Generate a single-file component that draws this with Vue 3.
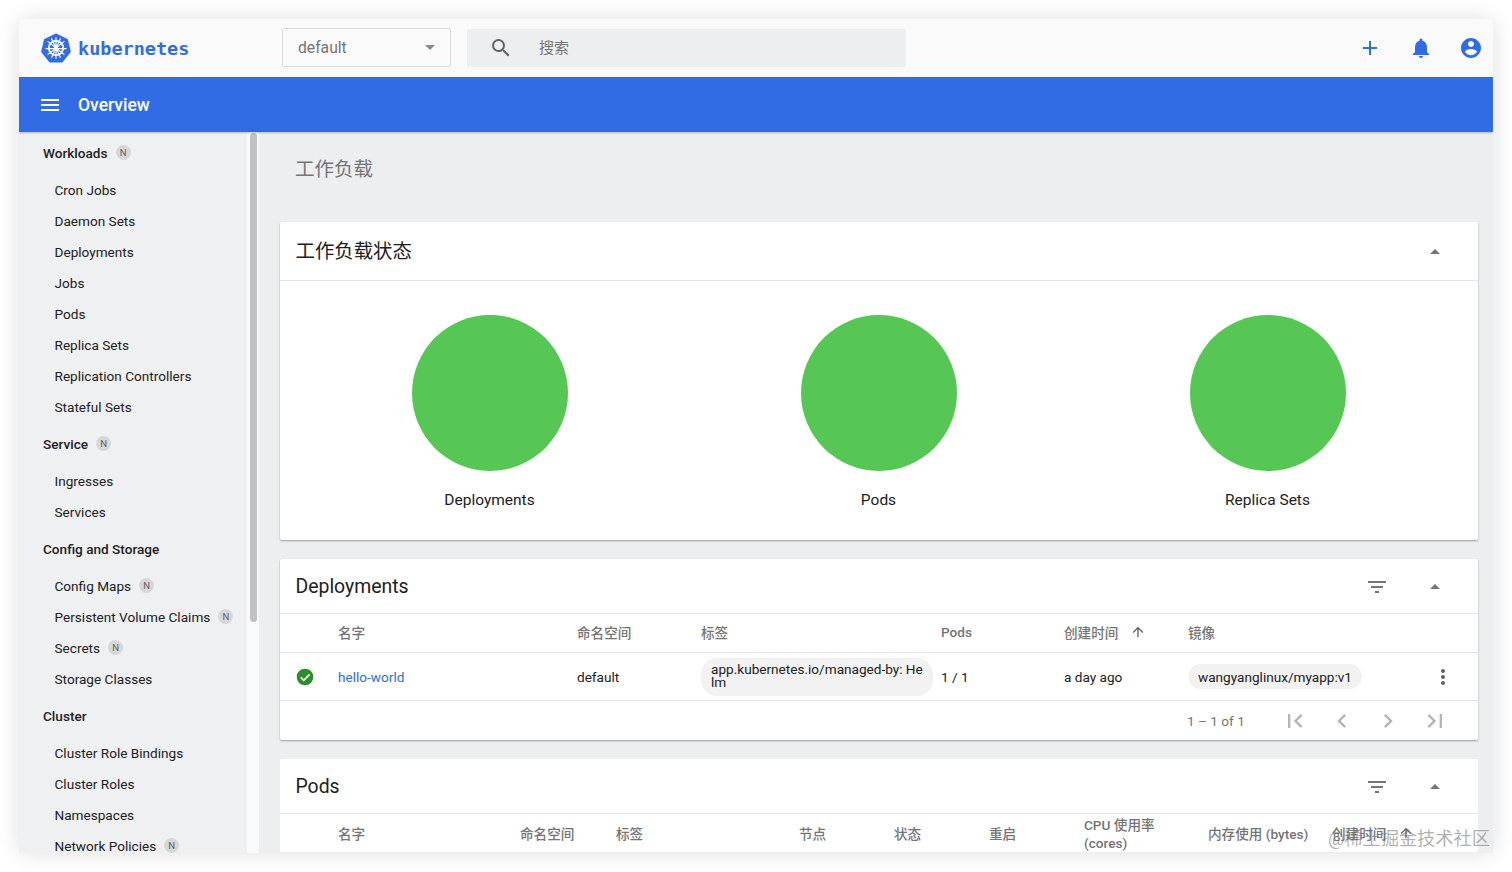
<script setup>
const nav = [
  { title: 'Workloads', n: true, items: [['Cron Jobs'], ['Daemon Sets'], ['Deployments'], ['Jobs'], ['Pods'], ['Replica Sets'], ['Replication Controllers'], ['Stateful Sets']] },
  { title: 'Service', n: true, items: [['Ingresses'], ['Services']] },
  { title: 'Config and Storage', items: [['Config Maps', 1], ['Persistent Volume Claims', 1], ['Secrets', 1], ['Storage Classes']] },
  { title: 'Cluster', items: [['Cluster Role Bindings'], ['Cluster Roles'], ['Namespaces'], ['Network Policies', 1]] }
]
const charts = ['Deployments', 'Pods', 'Replica Sets']
</script>

<template>
  <div class="page">
    <div class="window">
      <header class="topbar">
        <div class="brand">
          <svg class="logo" viewBox="0 0 30 30" width="30" height="30">
            <path d="M15 1.2 26.2 6.6 29 18.8 21.2 28.6H8.800000000000001L1 18.8 3.8 6.6Z" fill="#326ce5" stroke="#326ce5" stroke-width="1.6" stroke-linejoin="round"/>
            <g fill="none" stroke="#fff">
              <circle cx="15" cy="15" r="7.2" stroke-width="1.7"/>
              <circle cx="15" cy="15" r="1.6" stroke-width="1.2"/>
              <path stroke-width="1.2" stroke-linecap="round" d="M15 4.8V25.2M7 8.6 23 21.4M23 8.6 7 21.4M5 15.6H25M10.6 5.8 19.4 24.2M19.4 5.8 10.6 24.2"/>
            </g>
          </svg>
          <span class="wordmark">kubernetes</span>
        </div>
        <div class="ns-select">
          <span>default</span>
          <i class="caret"></i>
        </div>
        <div class="search">
          <svg viewBox="0 0 24 24" width="24" height="24"><path fill="#5f6368" d="M15.5 14h-.79l-.28-.27A6.47 6.47 0 0 0 16 9.5 6.5 6.5 0 1 0 9.500 16c1.610 0 3.090-.59 4.230-1.570l.27.28v.79l5 4.990L20.490 19l-4.990-5zm-6 0C7.010 14 5 11.990 5 9.500S7.010 5 9.500 5 14 7.010 14 9.500 11.990 14 9.500 14z"/></svg>
          <span class="search-text">搜索</span>
        </div>
        <div class="top-actions">
          <svg viewBox="0 0 24 24" width="24" height="24"><path fill="#326ce5" d="M19 13h-6v6h-2v-6H5v-2h6V5h2v6h6v2z"/></svg>
          <svg viewBox="0 0 24 24" width="24" height="24"><path fill="#326ce5" d="M12 22c1.100 0 2-.9 2-2h-4c0 1.100.89 2 2 2zm6-6v-5c0-3.070-1.640-5.640-4.500-6.320V4c0-.83-.67-1.500-1.500-1.500s-1.500.67-1.500 1.500v.68C7.630 5.360 6 7.920 6 11v5l-2 2v1h16v-1l-2-2z"/></svg>
          <svg viewBox="0 0 24 24" width="24" height="24"><path fill="#326ce5" d="M12 2C6.480 2 2 6.480 2 12s4.480 10 10 10 10-4.480 10-10S17.520 2 12 2zm0 3c1.660 0 3 1.340 3 3s-1.340 3-3 3-3-1.340-3-3 1.340-3 3-3zm0 14.200c-2.500 0-4.710-1.280-6-3.220.03-1.990 4-3.080 6-3.080 1.990 0 5.970 1.090 6 3.080-1.290 1.940-3.500 3.220-6 3.220z"/></svg>
        </div>
      </header>

      <div class="titlebar">
        <svg viewBox="0 0 24 24" width="24" height="24"><path fill="#fff" d="M3 18h18v-2H3v2zm0-5h18v-2H3v2zm0-7v2h18V6H3z"/></svg>
        <span>Overview</span>
      </div>

      <div class="body">
        <aside class="sidebar">
          <div class="nav">
            <template v-for="group in nav" :key="group.title">
              <div class="nav-head">
                <span>{{ group.title }}</span>
                <b v-if="group.n" class="ns-badge">N</b>
              </div>
              <div v-for="item in group.items" :key="item[0]" class="nav-item">
                <span>{{ item[0] }}</span>
                <b v-if="item[1]" class="ns-badge">N</b>
              </div>
            </template>
          </div>
        </aside>
        <div class="scrolltrack"><div class="scrollthumb"></div></div>

        <main class="content">
          <h1 class="page-title">工作负载</h1>

          <section class="card">
            <div class="card-head status-head">
              <h2 class="zh">工作负载状态</h2>
              <i class="card-up"></i>
            </div>
            <div class="charts">
              <div v-for="c in charts" :key="c" class="chart">
                <div class="disc"></div>
                <div class="chart-label">{{ c }}</div>
              </div>
            </div>
          </section>

          <section class="card">
            <div class="card-head">
              <h2>Deployments</h2>
              <svg class="filter" viewBox="0 0 24 24" width="24" height="24"><path fill="#757575" d="M10 18h4v-2h-4v2zM3 6v2h18V6H3zm3 7h12v-2H6v2z"/></svg>
              <i class="card-up"></i>
            </div>
            <div class="row thead dep-grid">
              <span></span>
              <span>名字</span>
              <span>命名空间</span>
              <span>标签</span>
              <span>Pods</span>
              <span class="sorted">创建时间
                <svg viewBox="0 0 24 24" width="16" height="16"><path fill="#616161" d="M4 12l1.410 1.410L11 7.830V20h2V7.830l5.580 5.590L20 12l-8-8-8 8z"/></svg>
              </span>
              <span>镜像</span>
            </div>
            <div class="row tbody dep-grid">
              <svg class="ok" viewBox="0 0 24 24" width="20" height="20"><circle cx="12" cy="12" r="10" fill="#2e8b2e"/><path fill="none" stroke="#fff" stroke-width="2" d="M7 12.500 10.500 16 17.500 8.800"/></svg>
              <a class="link">hello-world</a>
              <span>default</span>
              <span class="chip wrap">app.kubernetes.io/managed-by: He<br>lm</span>
              <span>1 / 1</span>
              <span>a day ago</span>
              <span class="chip image">wangyanglinux/myapp:v1</span>
              <svg class="kebab" viewBox="0 0 24 24" width="24" height="24"><path fill="#616161" d="M12 8c1.100 0 2-.9 2-2s-.9-2-2-2-2 .9-2 2 .9 2 2 2zm0 2c-1.100 0-2 .9-2 2s.9 2 2 2 2-.9 2-2-.9-2-2-2zm0 6c-1.100 0-2 .9-2 2s.9 2 2 2 2-.9 2-2-.9-2-2-2z"/></svg>
            </div>
            <div class="pager">
              <span class="range">1 – 1 of 1</span>
              <svg viewBox="0 0 24 24" width="28" height="28"><path d="M18.410 16.590 13.820 12l4.590-4.590L17 6l-6 6 6 6zM6 6h2v12H6z"/></svg>
              <svg viewBox="0 0 24 24" width="28" height="28"><path d="M15.410 7.410 14 6l-6 6 6 6 1.410-1.410L10.830 12z"/></svg>
              <svg viewBox="0 0 24 24" width="28" height="28"><path d="M10 6 8.590 7.410 13.170 12l-4.580 4.590L10 18l6-6z"/></svg>
              <svg viewBox="0 0 24 24" width="28" height="28"><path d="M5.590 7.410 10.180 12l-4.590 4.590L7 18l6-6-6-6zM16 6h2v12h-2z"/></svg>
            </div>
          </section>

          <section class="card last">
            <div class="card-head">
              <h2>Pods</h2>
              <svg class="filter" viewBox="0 0 24 24" width="24" height="24"><path fill="#757575" d="M10 18h4v-2h-4v2zM3 6v2h18V6H3zm3 7h12v-2H6v2z"/></svg>
              <i class="card-up"></i>
            </div>
            <div class="row thead pod-grid">
              <span></span>
              <span>名字</span>
              <span>命名空间</span>
              <span>标签</span>
              <span>节点</span>
              <span>状态</span>
              <span>重启</span>
              <span class="two-line">CPU 使用率<br>(cores)</span>
              <span>内存使用 (bytes)</span>
              <span class="sorted">创建时间
                <svg viewBox="0 0 24 24" width="16" height="16"><path fill="#616161" d="M4 12l1.410 1.410L11 7.830V20h2V7.830l5.580 5.590L20 12l-8-8-8 8z"/></svg>
              </span>
            </div>
          </section>
        </main>
      </div>
      <div class="watermark">@稀土掘金技术社区</div>
    </div>
  </div>
</template>

<style>
html, body { margin: 0; background: #fff; }
</style>

<style scoped>
* { box-sizing: border-box; }
.page {
  width: 1512px;
  height: 872px;
  padding: 19px;
  overflow: hidden;
  font-family: Roboto, "Noto Sans CJK SC", sans-serif;
  color: #212121;
}
.window {
  position: relative;
  width: 1474px;
  height: 834px;
  display: flex;
  flex-direction: column;
  overflow: hidden;
  background: #eceef0;
  box-shadow: 0 0 22px rgba(0, 0, 0, 0.13);
  border-radius: 4px 4px 0 0;
}
.topbar {
  flex: 0 0 58px;
  display: flex;
  align-items: center;
  background: #fafafa;
}
.brand {
  width: 263px;
  padding-left: 22px;
  display: flex;
  align-items: center;
  gap: 7px;
}
.wordmark {
  font-family: "DejaVu Sans Mono", monospace;
  font-weight: 700;
  font-size: 18.5px;
  color: #326ce5;
}
.ns-select {
  width: 169px;
  height: 39px;
  margin-top: -1px;
  border: 1px solid #dcdcdc;
  border-radius: 2px;
  padding: 0 15px;
  display: flex;
  align-items: center;
  justify-content: space-between;
  font-size: 15.700px;
  color: #757575;
}
.caret {
  width: 0;
  height: 0;
  border-left: 5px solid transparent;
  border-right: 5px solid transparent;
  border-top: 5px solid #8a8a8a;
}
.search {
  margin-left: 16px;
  margin-top: -1px;
  width: 439px;
  height: 38px;
  background: #eceef0;
  border-radius: 2px;
  display: flex;
  align-items: center;
  padding-left: 22px;
  gap: 26px;
  font-size: 15px;
  color: #757575;
}
.search-text { margin-top: -2px; }
.top-actions {
  margin-left: auto;
  display: flex;
  align-items: center;
  gap: 26.5px;
  padding-right: 10px;
}
.titlebar {
  flex: 0 0 55px;
  background: #326ce5;
  color: #fff;
  display: flex;
  align-items: center;
  padding-left: 19px;
  gap: 16px;
  font-size: 17.500px;
  font-weight: 500;
  box-shadow: 0 1px 2px rgba(0, 0, 0, 0.25);
  z-index: 2;
}
.body {
  flex: 1;
  min-height: 0;
  display: flex;
}
.sidebar {
  width: 228px;
  overflow: hidden;
  background: #eff0f2;
}
.nav { margin-top: -1px; }
.nav-head {
  height: 43px;
  padding-left: 24px;
  display: flex;
  align-items: center;
  gap: 8px;
  font-size: 13.600px;
  font-weight: 500;
  color: #212121;
}
.nav-item {
  height: 31px;
  padding-left: 35.500px;
  display: flex;
  align-items: center;
  gap: 8px;
  font-size: 13.600px;
  color: #212121;
}
.ns-badge {
  width: 15px;
  height: 15px;
  border-radius: 50%;
  background: #d6d7d9;
  color: #616161;
  font-size: 9.500px;
  font-weight: 400;
  display: flex;
  align-items: center;
  justify-content: center;
}
.scrolltrack {
  width: 12px;
  background: #fafafa;
  padding: 1px 3px 0;
}
.scrollthumb {
  width: 7px;
  height: 489px;
  background: #c1c1c1;
  border-radius: 4px;
}
.content {
  flex: 1;
  min-width: 0;
  padding: 0 15px 0 21px;
  overflow: hidden;
}
.page-title {
  margin: 0;
  height: 90px;
  padding: 24px 0 0 15px;
  font-size: 19.500px;
  line-height: 28px;
  font-weight: 400;
  color: #757575;
}
.card {
  background: #fff;
  border-radius: 2px;
  margin-bottom: 19px;
  box-shadow: 0 1px 2px rgba(0, 0, 0, 0.35);
}
.card.last { box-shadow: none; }
.card-head {
  height: 55px;
  padding: 0 15.500px;
  display: flex;
  align-items: center;
  border-bottom: 1px solid #e5e5e5;
}
.card-head h2 {
  margin: 0;
  font-size: 19.400px;
  font-weight: 400;
  color: #212121;
  flex: 1;
}
.status-head { height: 59px; }
.status-head h2 { margin-top: -3px; }
.card-head .filter { margin-right: 41px; margin-top: 2px; }
.card-up {
  margin-right: 23px;
  width: 0;
  height: 0;
  border-left: 5px solid transparent;
  border-right: 5px solid transparent;
  border-bottom: 5px solid #757575;
}
.charts {
  height: 259px;
  display: grid;
  grid-template-columns: repeat(3, 389px);
  padding: 34px 15px 0;
}
.chart {
  display: flex;
  flex-direction: column;
  align-items: center;
}
.disc {
  width: 156px;
  height: 156px;
  border-radius: 50%;
  background: #56c754;
}
.chart-label {
  margin-top: 19px;
  font-size: 15.500px;
  line-height: 20px;
  color: #212121;
}
.row {
  display: grid;
  align-items: center;
  font-size: 13.600px;
  position: relative;
}
.dep-grid { grid-template-columns: 58px 239px 124px 240px 123px 124px 1fr; }
.pod-grid { grid-template-columns: 58px 182px 96px 183px 95px 95px 95px 124px 124px 1fr; }
.thead {
  height: 39px;
  padding-bottom: 3px;
  color: #757575;
  font-weight: 500;
  border-bottom: 1px solid #e5e5e5;
}
.card.last .thead { border-bottom: 0; height: 38px; padding-bottom: 0; }
.thead .sorted {
  display: flex;
  align-items: center;
  gap: 12px;
}
.two-line { line-height: 18px; margin-top: 2px; }
.tbody {
  height: 48px;
  border-bottom: 1px solid #e5e5e5;
}
.tbody .ok { margin-left: 15px; }
.link { color: #326ce5; }
.chip {
  background: #f2f2f2;
  border-radius: 16px;
  justify-self: start;
}
.chip.wrap {
  width: 232px;
  height: 38px;
  padding: 5px 10px;
  line-height: 13.500px;
}
.chip.image {
  padding: 0 10px;
  height: 25px;
  display: flex;
  align-items: center;
}
.kebab {
  position: absolute;
  right: 23px;
  top: 12px;
}
.pager {
  height: 39px;
  display: flex;
  align-items: center;
  padding-left: 907px;
  font-size: 13.600px;
  color: #757575;
}
.pager .range { width: 94px; }
.pager svg {
  fill: #b5b5b5;
  margin-right: 18.500px;
}
.watermark {
  position: absolute;
  left: 1309px;
  top: 805px;
  font-size: 18.200px;
  color: rgba(110, 110, 110, 0.55);
  white-space: nowrap;
}
</style>
